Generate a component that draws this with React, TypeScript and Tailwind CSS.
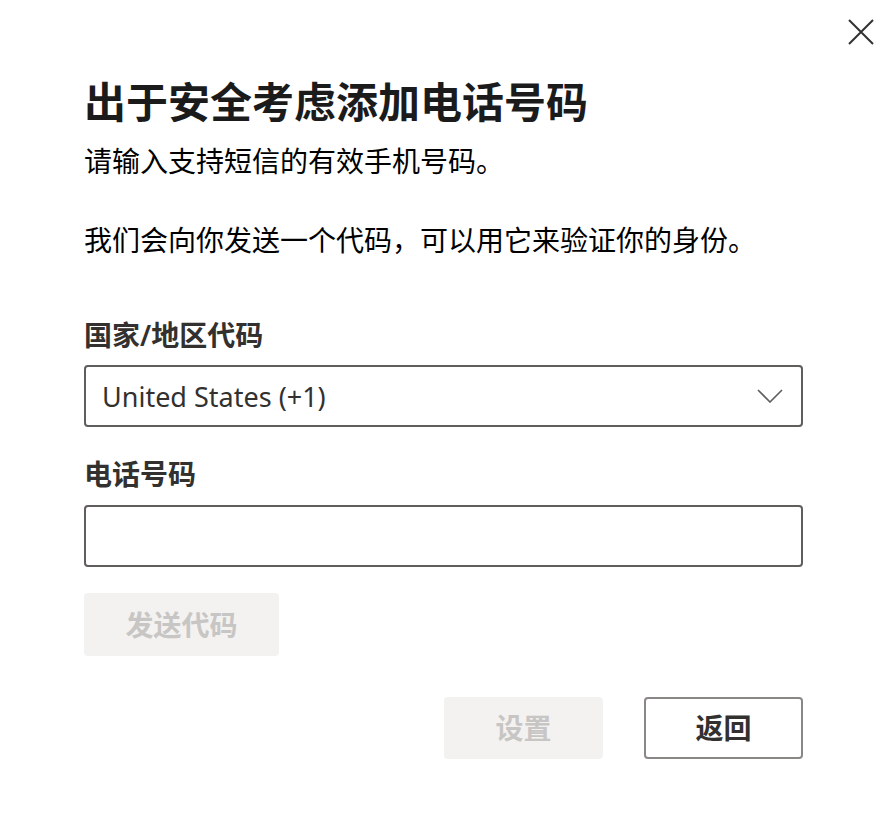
const font = { fontFamily: '"Noto Sans", "Noto Sans CJK SC", sans-serif' };

function Close() {
	return (
		<svg width="26" height="26" viewBox="0 0 26 26" fill="none" stroke="#323130" strokeWidth="2">
			<path d="M1 1L25 25M25 1L1 25" />
		</svg>
	);
}

function Chevron() {
	return (
		<svg width="26" height="14" viewBox="0 0 26 14" fill="none" stroke="#605e5c" strokeWidth="1.6">
			<path d="M1 1L13 13L25 1" />
		</svg>
	);
}

export default function App() {
	return (
		<div className="w-[885px] h-[834px] bg-white text-black" style={font}>
			<div className="flex justify-end h-[74px] pt-[19px] pr-[11px]">
				<button className="h-[26px]">
					<Close />
				</button>
			</div>
			<div className="flex flex-col pl-[84px] pr-[82px]">
				<h1 className="text-[42px] leading-[56px] font-bold text-[#1b1b1b]">出于安全考虑添加电话号码</h1>
				<p className="mt-[11px] text-[28px] leading-[40px]">请输入支持短信的有效手机号码。</p>
				<p className="mt-[39px] text-[28px] leading-[40px]">我们会向你发送一个代码，可以用它来验证你的身份。</p>

				<label className="mt-[57px] text-[28px] leading-[36px] font-semibold text-[#323130]">国家/地区代码</label>
				<div className="mt-[12px] h-[62px] flex items-center justify-between border-2 border-[#605e5c] rounded-[4px] pl-[16px] pr-[18px]">
					<span className="pt-[3px] text-[27px] text-[#323130]">United States (+1)</span>
					<Chevron />
				</div>

				<label className="mt-[29px] text-[28px] leading-[36px] font-semibold text-[#323130]">电话号码</label>
				<div className="mt-[13px] h-[62px] border-2 border-[#605e5c] rounded-[4px]" />

				<div className="mt-[26px]">
					<button className="w-[195px] h-[63px] rounded-[4px] bg-[#f3f2f1] text-[28px] font-semibold text-[#c8c6c4]">
						发送代码
					</button>
				</div>

				<div className="mt-[41px] flex justify-end gap-[41px]">
					<button className="w-[159px] h-[62px] rounded-[4px] bg-[#f3f2f1] text-[28px] font-semibold text-[#c8c6c4]">
						设置
					</button>
					<button className="w-[159px] h-[62px] rounded-[4px] border-2 border-[#8a8886] bg-white text-[28px] font-semibold text-[#323130]">
						返回
					</button>
				</div>
			</div>
		</div>
	);
}
